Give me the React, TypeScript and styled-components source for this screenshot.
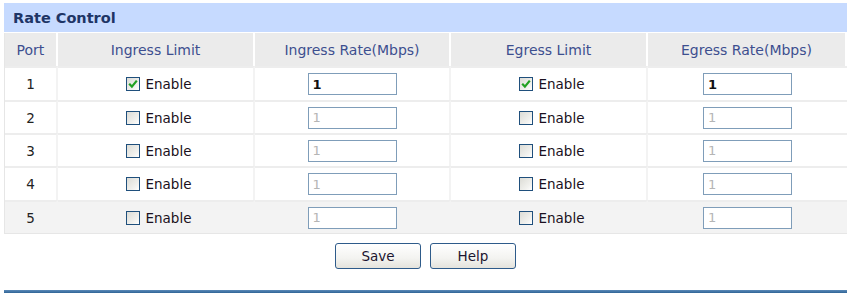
import styled, { createGlobalStyle } from 'styled-components';

const GlobalStyle = createGlobalStyle`
  body {
    margin: 0;
    background: #ffffff;
    font-family: 'DejaVu Sans', Verdana, sans-serif;
  }
`;

const Page = styled.div`
  width: 851px;
  height: 298px;
  padding: 3px 4px 0 4px;
  box-sizing: border-box;
  display: flex;
  flex-direction: column;
`;

const TitleBar = styled.div`
  height: 29px;
  background: #c6daff;
  display: flex;
  align-items: center;
  padding-left: 9px;
  font-size: 14.5px;
  font-weight: bold;
  color: #1e3566;
`;

const Table = styled.div`
  display: grid;
  grid-template-columns: 53px 197px 196px 197px 1fr;
  border-left: 1px solid #e6e6e6;
  border-bottom: 1px solid #e6e6e6;
  margin-top: 1px;
`;

const HeadCell = styled.div`
  height: 33px;
  background: #ebebeb;
  border-right: 2px solid #ffffff;
  display: flex;
  align-items: center;
  justify-content: center;
  font-size: 14px;
  color: #3d4f8f;
  &:last-child {
    border-right: none;
  }
`;

type CellProps = { $shaded: boolean; $tall: boolean; $last?: boolean };

const Cell = styled.div<CellProps>`
  height: ${(props) => (props.$tall ? '32px' : '31px')};
  border-top: 2px solid #ededed;
  border-right: ${(props) => (props.$last ? 'none' : '2px solid #f3f3f3')};
  background: ${(props) => (props.$shaded ? '#f3f3f3' : '#ffffff')};
  display: flex;
  align-items: center;
  justify-content: center;
  font-size: 13.5px;
  color: #222;
`;

const CheckLabel = styled.label`
  display: flex;
  align-items: center;
  gap: 6px;
  padding-left: 6px;
  color: #1a1020;
  font-size: 13.5px;
`;

const Box = styled.span`
  width: 14px;
  height: 14px;
  box-sizing: border-box;
  border: 1px solid #1f4f7c;
  background: linear-gradient(135deg, #dcdcd6 0%, #f2f2ef 70%, #ffffff 100%);
  display: flex;
  align-items: center;
  justify-content: center;
`;

type RateInputProps = { $enabled: boolean };

const RateInput = styled.div<RateInputProps>`
  width: 89px;
  height: 22px;
  box-sizing: border-box;
  border: 1px solid #7f9db9;
  background: #ffffff;
  display: flex;
  align-items: center;
  padding-left: 4px;
  font-size: 13px;
  color: ${(props) => (props.$enabled ? '#111' : '#b5b5b5')};
  font-weight: ${(props) => (props.$enabled ? 'bold' : 'normal')};
`;

const ButtonRow = styled.div`
  display: flex;
  justify-content: center;
  gap: 9px;
  margin-top: 9px;
`;

const Button = styled.button`
  width: 86px;
  height: 26px;
  border: 1px solid #2e5b8a;
  border-radius: 3px;
  background: linear-gradient(#ffffff, #f3f3f0 60%, #e4e3dc);
  font-family: 'DejaVu Sans', Verdana, sans-serif;
  font-size: 13.5px;
  color: #1c1530;
  padding: 0;
`;

const BottomRule = styled.div`
  margin-top: 21px;
  height: 3px;
  background: linear-gradient(#5b8ab8, #2f6496);
`;

const Check = ({ checked }: { checked: boolean }) => (
  <CheckLabel>
    <Box>
      {checked && (
        <svg width='10' height='10' viewBox='0 0 10 10'>
          <path d='M1.2 4.8 L3.9 7.6 L8.8 1.6' stroke='#21a121' strokeWidth='2.2' fill='none' />
        </svg>
      )}
    </Box>
    Enable
  </CheckLabel>
);

const ports = [1, 2, 3, 4, 5];
const headers = ['Port', 'Ingress Limit', 'Ingress Rate(Mbps)', 'Egress Limit', 'Egress Rate(Mbps)'];

const App = () => {
  return (
    <>
      <GlobalStyle />
      <Page>
        <TitleBar>Rate Control</TitleBar>
        <Table>
          {headers.map((h) => (
            <HeadCell key={h}>{h}</HeadCell>
          ))}
          {ports.map((p) => {
            const on = p === 1;
            const shaded = p === 5;
            const tall = p === 1 || p === 4;
            return [
              <Cell key={`p${p}`} $shaded={shaded} $tall={tall}>{p}</Cell>,
              <Cell key={`il${p}`} $shaded={shaded} $tall={tall}><Check checked={on} /></Cell>,
              <Cell key={`ir${p}`} $shaded={shaded} $tall={tall}><RateInput $enabled={on}>1</RateInput></Cell>,
              <Cell key={`el${p}`} $shaded={shaded} $tall={tall}><Check checked={on} /></Cell>,
              <Cell key={`er${p}`} $shaded={shaded} $tall={tall} $last><RateInput $enabled={on}>1</RateInput></Cell>,
            ];
          })}
        </Table>
        <ButtonRow>
          <Button>Save</Button>
          <Button>Help</Button>
        </ButtonRow>
        <BottomRule />
      </Page>
    </>
  );
};

export default App;
